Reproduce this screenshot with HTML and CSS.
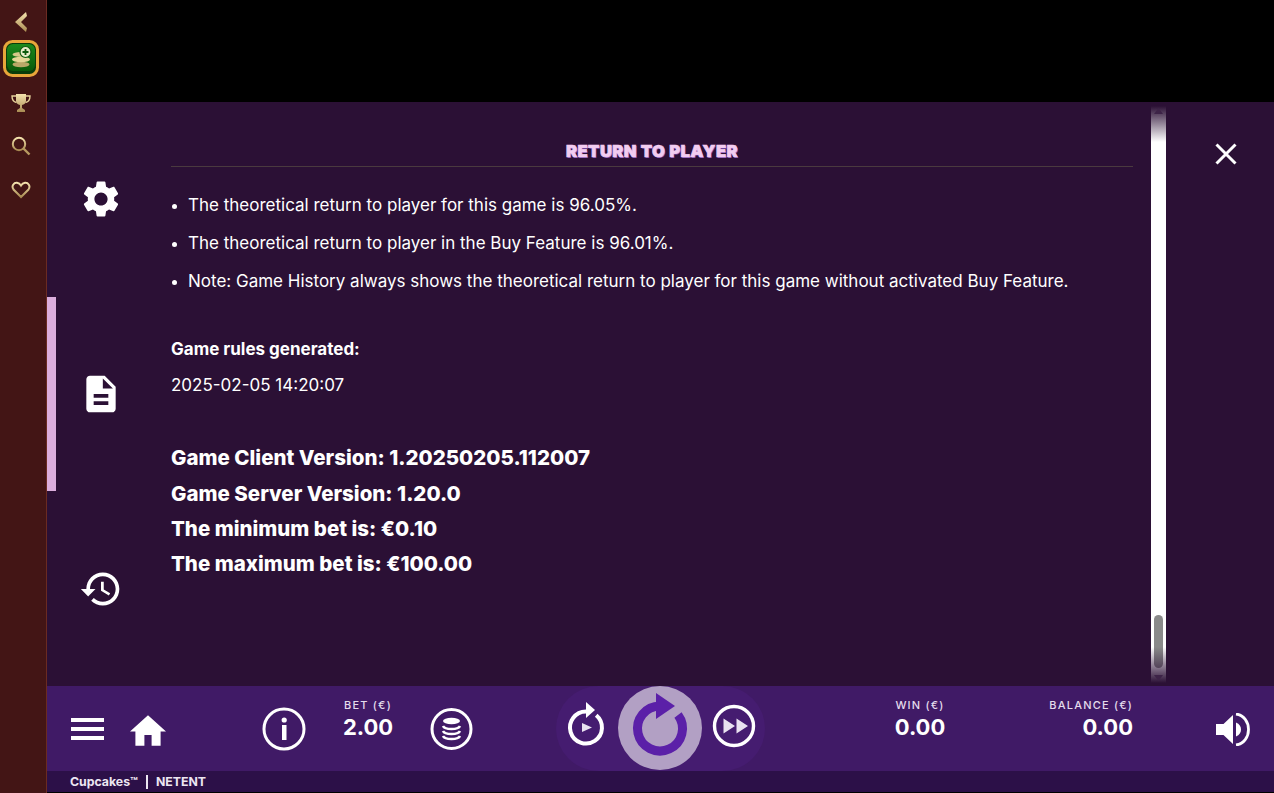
FILE: index.html
```html
<!DOCTYPE html>
<html lang="en">
<head>
<meta charset="utf-8">
<title>Cupcakes</title>
<link rel="stylesheet" href="styles.css">
</head>
<body>
<div class="app">
  <aside class="side">
    <svg class="side-back" width="16" height="22" viewBox="0 0 16 22"><defs><linearGradient id="gold" x1="0" y1="0" x2="0" y2="1"><stop offset="0" stop-color="#f5e3ae"/><stop offset="1" stop-color="#a98b52"/></linearGradient></defs><path d="M13 1 2 11l11 10 1-4-6-6 6-6z" fill="url(#gold)"/></svg>
    <svg class="side-game" width="36" height="37" viewBox="0 0 36 37">
      <defs><linearGradient id="green" x1="0" y1="0" x2="0" y2="1"><stop offset="0" stop-color="#1c8a1c"/><stop offset="1" stop-color="#0a5a0a"/></linearGradient></defs>
      <rect x="1.500" y="1.500" width="33" height="34" rx="8" fill="#0a3d0a" stroke="#e8a63a" stroke-width="3"/>
      <rect x="4" y="4" width="28" height="27" rx="6" fill="url(#green)"/>
      <ellipse cx="18" cy="24.500" rx="8.500" ry="2.700" fill="#b9a868"/><ellipse cx="18" cy="19.500" rx="9" ry="2.700" fill="#e4d696"/><ellipse cx="18" cy="14.500" rx="8.500" ry="2.500" fill="#d6c888"/>
      <circle cx="22.500" cy="12" r="5.500" fill="#e8ecc8" stroke="#0f5a0f" stroke-width="1.200"/><path d="M22.500 9v6M19.500 12h6" stroke="#0d5a0d" stroke-width="1.800"/>
    </svg>
    <svg class="side-icon" width="20" height="20" viewBox="0 0 20 20"><path d="M5 1h10v7a5 5 0 0 1-4 4v3l3 2v2H6v-2l3-2v-3a5 5 0 0 1-4-4z" fill="url(#gold)"/><path d="M5 3H1c0 4 2 6 4.500 6.500M15 3h4c0 4-2 6-4.500 6.500" fill="none" stroke="#e8d49c" stroke-width="1.400"/></svg>
    <svg class="side-icon side-search" width="20" height="20" viewBox="0 0 20 20"><circle cx="8" cy="8" r="6.200" fill="none" stroke="url(#gold)" stroke-width="2"/><path d="m12.500 12.500 6 6" stroke="#b89a60" stroke-width="2.400"/></svg>
    <svg class="side-icon" width="20" height="18" viewBox="0 0 20 18"><path d="M10 16 2.500 8.500C0 5 3 1.500 6 1.800 8 2 9.200 3.200 10 4.500 10.800 3.200 12 2 14 1.800 17 1.500 20 5 17.500 8.500z" fill="none" stroke="url(#gold)" stroke-width="2"/></svg>
  </aside>
  <main class="main">
    <div class="topblack"></div>
    <section class="panel">
      <nav class="rail">
        <div class="rail-item">
          <svg width="44" height="44" viewBox="0 0 24 24" fill="#fff"><path d="M19.14 12.94c.04-.3.06-.61.06-.94 0-.32-.02-.64-.07-.94l2.03-1.58c.18-.14.23-.41.12-.61l-1.92-3.32c-.12-.22-.37-.29-.59-.22l-2.39.96c-.5-.38-1.03-.7-1.62-.94l-.36-2.54c-.04-.24-.24-.41-.48-.41h-3.84c-.24 0-.43.17-.47.41l-.36 2.54c-.59.24-1.13.57-1.62.94l-2.39-.96c-.22-.08-.47 0-.59.22L2.74 8.87c-.12.21-.08.47.12.61l2.03 1.58c-.05.3-.09.63-.09.94s.02.64.07.94l-2.03 1.58c-.18.14-.23.41-.12.61l1.92 3.32c.12.22.37.29.59.22l2.39-.96c.5.38 1.03.7 1.62.94l.36 2.54c.05.24.24.41.48.41h3.84c.24 0 .44-.17.47-.41l.36-2.54c.59-.24 1.13-.56 1.62-.94l2.39.96c.22.08.47 0 .59-.22l1.92-3.32c.12-.22.07-.47-.12-.61l-2.01-1.58zM12 15.600c-1.980 0-3.600-1.620-3.600-3.600s1.620-3.600 3.600-3.600 3.600 1.620 3.600 3.600-1.620 3.600-3.600 3.600z"/></svg>
        </div>
        <div class="rail-item rail-item-active">
          <svg width="44" height="44" viewBox="0 0 24 24" fill="#fff"><path d="M14 2H6c-1.100 0-1.990.9-1.990 2L4 20c0 1.100.89 2 1.990 2H18c1.100 0 2-.9 2-2V8l-6-6zm2 16H8v-2h8v2zm0-4H8v-2h8v2zm-3-5V3.500L18.500 9H13z"/></svg>
        </div>
        <div class="rail-item">
          <svg width="44" height="44" viewBox="0 0 24 24" fill="#fff"><path d="M13 3c-4.970 0-9 4.030-9 9H1l3.890 3.890.07.14L9 12H6c0-3.870 3.130-7 7-7s7 3.130 7 7-3.130 7-7 7c-1.930 0-3.680-.79-4.940-2.060l-1.420 1.420C8.270 19.990 10.510 21 13 21c4.970 0 9-4.030 9-9s-4.030-9-9-9zm-1 5v5l4.280 2.540.72-1.210-3.500-2.080V8H12z"/></svg>
        </div>
      </nav>
      <article class="content">
        <h2 class="title">Return to Player</h2>
        <ul class="rules">
          <li>The theoretical return to player for this game is 96.05%.</li>
          <li>The theoretical return to player in the Buy Feature is 96.01%.</li>
          <li>Note: Game History always shows the theoretical return to player for this game without activated Buy Feature.</li>
        </ul>
        <p class="gen-label">Game rules generated:</p>
        <p class="gen-date">2025-02-05 14:20:07</p>
        <div class="versions">
          <p>Game Client Version: 1.20250205.112007</p>
          <p>Game Server Version: 1.20.0</p>
          <p>The minimum bet is: €0.10</p>
          <p>The maximum bet is: €100.00</p>
        </div>
      </article>
      <div class="scroll">
        <div class="scroll-thumb"></div>
        <svg class="arrow-up" width="9" height="6" viewBox="0 0 9 6"><path d="M4.500 0 9 6H0z" fill="#3d2347"/></svg>
        <svg class="arrow-down" width="9" height="6" viewBox="0 0 9 6"><path d="M4.500 6 9 0H0z" fill="#3d2347"/></svg>
      </div>
      <div class="close">
        <svg width="22" height="22" viewBox="0 0 22 22"><path d="m1.500 1.500 19 19m0-19-19 19" stroke="#fff" stroke-width="3"/></svg>
      </div>
    </section>
    <section class="bar">
      <div class="menu"><span></span><span></span><span></span></div>
      <svg class="home" width="36" height="31" viewBox="2 3 20 17" fill="#fff"><path d="M10 20v-6h4v6h5v-8h3L12 3 2 12h3v8z"/></svg>
      <svg class="info" width="44" height="44" viewBox="0 0 44 44"><circle cx="22" cy="22" r="20" fill="none" stroke="#fff" stroke-width="3"/><rect x="20" y="18" width="4.500" height="15" fill="#fff"/><circle cx="22.200" cy="13" r="2.600" fill="#fff"/></svg>
      <div class="stat stat-bet"><span class="stat-label">BET (€)</span><span class="stat-value">2.00</span></div>
      <svg class="coins" width="43" height="44" viewBox="0 0 43 44"><circle cx="21.500" cy="22" r="19.500" fill="none" stroke="#fff" stroke-width="3"/><ellipse cx="21.500" cy="14" rx="8.500" ry="3.300" fill="#fff"/><path d="M13 19c1 2 4 3 8.500 3s7.500-1 8.500-3M13 24c1 2 4 3 8.500 3s7.500-1 8.500-3M13 29c1 2 4 3 8.500 3s7.500-1 8.500-3" fill="none" stroke="#fff" stroke-width="2.600"/></svg>
      <div class="spin">
        <svg width="62" height="85" viewBox="0 0 62 85"><path d="M30 25.500A16 16 0 1 0 40.200 29.200" fill="none" stroke="#fff" stroke-width="4"/><path d="m30 16 9 8-9 8z" fill="#fff"/><path d="m26 37 10 4.500-10 4.500z" fill="#e9e2f0"/></svg>
        <div class="spin-main">
          <svg width="84" height="84" viewBox="0 0 84 84"><path d="M42 20A22.500 22.500 0 1 0 60 29" fill="none" stroke="#5b20a8" stroke-width="9"/><path d="M38 7 57 20 38 33z" fill="#5b20a8"/></svg>
        </div>
        <svg width="63" height="85" viewBox="0 0 63 85"><circle cx="32" cy="40" r="19.500" fill="none" stroke="#fff" stroke-width="3.400"/><path d="m21.500 32.500 11.500 7.500-11.500 7.500zm13 0L46 40l-11.500 7.500z" fill="#e9e2f0"/></svg>
      </div>
      <div class="stat stat-win"><span class="stat-label">WIN (€)</span><span class="stat-value">0.00</span></div>
      <div class="stat stat-balance"><span class="stat-label">BALANCE (€)</span><span class="stat-value">0.00</span></div>
      <svg class="volume" width="34" height="33" viewBox="0 0 34 33" fill="#fff"><path d="M0 11h7.500L17 2v29l-9.500-9H0z"/><path d="M20 9.500c3.500 1.500 5 4 5 7s-1.500 5.500-5 7z"/><path d="M20 1c8 1 12.500 8 12.500 15.500S28 31 20 32" fill="none" stroke="#fff" stroke-width="2.800"/></svg>
    </section>
    <footer class="foot"><span>Cupcakes™</span><i class="foot-sep"></i><span>NETENT</span></footer>
  </main>
</div>
</body>
</html>
```
FILE: styles.css
```css
* { box-sizing: border-box; }
html, body { margin: 0; height: 100%; background: #000; overflow: hidden; }
body { font-family: "Inter", "Liberation Sans", sans-serif; color: #fff; }
.app { display: flex; width: 1274px; height: 793px; }

.side { width: 47px; flex: none; background: #431515; border-right: 1px solid #6b2b22; padding-right: 4px; display: flex; flex-direction: column; align-items: center; }
.side svg { display: block; flex: none; }
.side-back { margin-top: 11px; }
.side-game { margin-top: 7px; }
.side-icon { margin-top: 24px; }
.side-game + .side-icon { margin-top: 16px; }
.side .side-search { margin-top: 23px; margin-bottom: 1px; }

.main { flex: 1; display: flex; flex-direction: column; min-width: 0; }
.topblack { height: 102px; background: #000; flex: none; }

.panel { height: 584px; flex: none; background: #2b1035; display: flex; }
.rail { width: 107px; flex: none; display: flex; flex-direction: column; }
.rail-item { flex: 1; display: flex; align-items: center; justify-content: center; position: relative; }
.rail-item svg { display: block; }
.rail-item-active::before { content: ""; position: absolute; left: 0; top: 0; bottom: 0; width: 9px; background: #dcaedd; }

.content { width: 997px; flex: none; padding: 39px 18px 0 17px; }
.title { margin: 0; padding-bottom: 4px; height: 26px; border-bottom: 1px solid #4a3a3f; text-align: center; font-size: 16.500px; line-height: 21px; font-weight: 900; text-transform: uppercase; letter-spacing: .5px; color: #f2cdf0; -webkit-text-stroke: .7px #f2cdf0; text-shadow: 1px 1px 0 #7a4fb0; }
.rules { margin: 26px 0 0; padding: 0 0 0 17px; font-size: 17px; line-height: 24px; }
.rules li { margin-bottom: 14px; }
.rules li::marker { font-size: 14px; }
.gen-label { margin: 44px 0 0; font-size: 17px; line-height: 24px; font-weight: 700; }
.gen-date { margin: 12px 0 0; font-size: 17px; line-height: 24px; }
.versions { margin-top: 43.400px; font-size: 20.500px; font-weight: 800; line-height: 35.300px; }
.versions p { margin: 0; }

.scroll { width: 15px; flex: none; margin: 4px 0 3px 0; background: #fff; position: relative; }
.scroll::after { content: ""; position: absolute; inset: 0; background: linear-gradient(to bottom, #2b1035 0, rgba(43,16,53,0) 36px), linear-gradient(to top, #2b1035 0, rgba(43,16,53,0) 36px); }
.scroll-thumb { position: absolute; left: 3px; width: 9px; bottom: 15px; height: 53px; background: #8a8a8a; border-radius: 5px; }
.arrow-up, .arrow-down { position: absolute; left: 3px; z-index: 1; }
.arrow-up { top: 2px; }
.arrow-down { bottom: 2px; }

.close { flex: 1; padding: 41px 0 0 49px; }
.close svg { display: block; }

.bar { height: 85px; flex: none; background: #401a66; display: flex; align-items: center; padding-left: 24px; }
.bar > svg { display: block; flex: none; }
.menu { width: 33px; display: flex; flex-direction: column; gap: 5px; }
.menu span { height: 4px; background: #fff; display: block; }
.home { margin-left: 26px; margin-top: 3px; }
.info { margin-left: 96px; margin-top: 1px; }
.stat { display: flex; flex-direction: column; align-items: center; flex: none; margin-top: -18px; }
.stat-label { font-size: 11px; line-height: 15px; letter-spacing: 1.200px; font-weight: 500; color: #e4dcec; }
.stat-value { font-size: 22px; line-height: 28px; font-weight: 700; }
.stat-bet { width: 80px; margin-left: 22px; }
.coins { margin-left: 22px; margin-top: 1px; }
.spin { width: 209px; height: 85px; margin-left: 83px; flex: none; background: #451c70; border-radius: 42.500px / 50%; display: flex; }
.spin svg { display: block; flex: none; }
.spin-main { width: 84px; height: 84px; border-radius: 50%; background: #b2a0c4; flex: none; }
.stat-win { width: 100px; margin-left: 105px; }
.stat-balance { width: 120px; margin-left: 43px; align-items: flex-end; }
.volume { margin-left: 83px; margin-top: 2px; }

.foot { height: 21px; flex: none; margin-bottom: 1px; background: #2c1048; display: flex; align-items: center; padding-left: 23px; font-size: 12.300px; font-weight: 700; color: #ece6f2; }
.foot-sep { width: 2px; height: 14px; background: #ece6f2; margin: 0 8px; display: block; }
```
